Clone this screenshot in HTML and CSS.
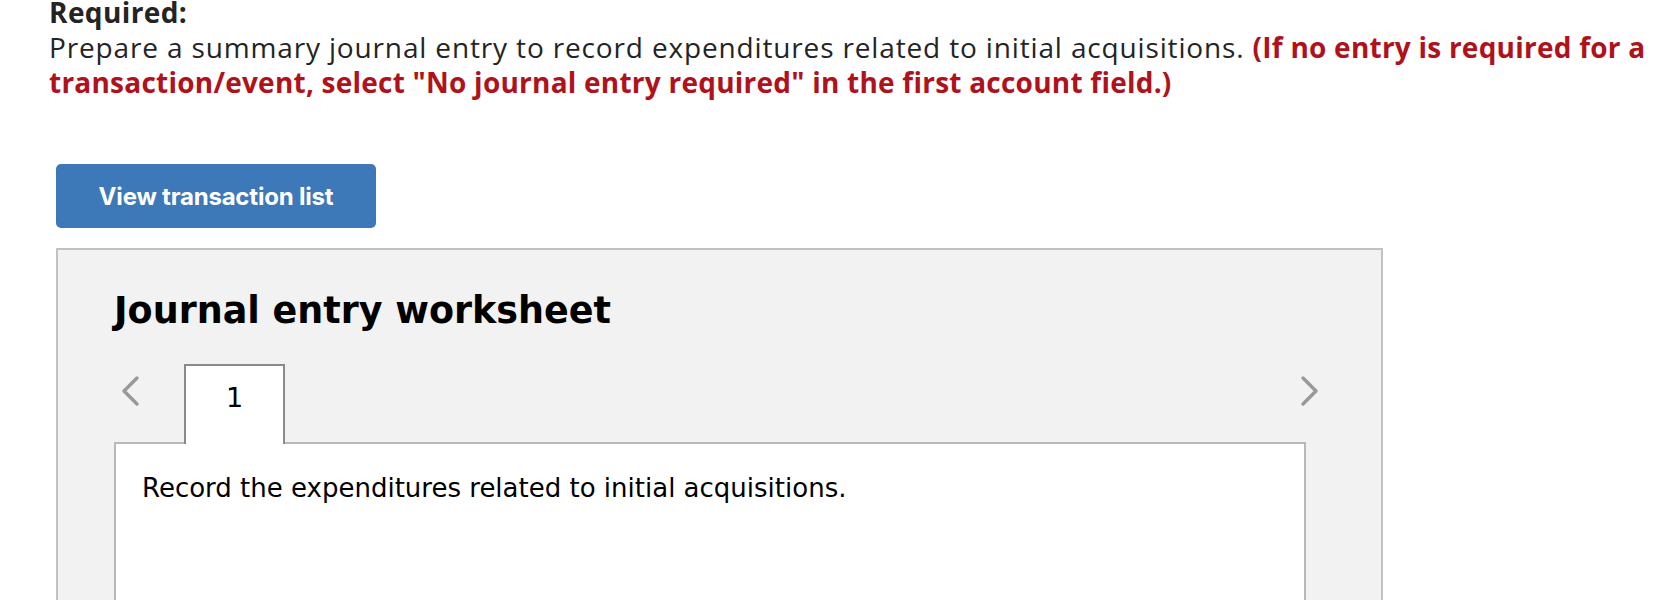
FILE: index.html
```html
<!DOCTYPE html>
<html lang="en">
<head>
<meta charset="utf-8">
<title>Journal entry worksheet</title>
<link rel="stylesheet" href="styles.css">
</head>
<body>
<main class="page">
  <section class="question">
    <p class="req-label">Required:</p>
    <p class="req-text">Prepare a summary journal entry to record expenditures related to initial acquisitions. <strong class="hint">(If no entry is required for a transaction/event, select "No journal entry required" in the first account field.)</strong></p>
  </section>

  <button class="btn-view" type="button">View transaction list</button>

  <section class="worksheet">
    <h2 class="ws-title">Journal entry worksheet</h2>
    <div class="ws-nav">
      <div class="nav-prev">
        <svg class="chev" width="20" height="32" viewBox="0 0 20 32" aria-hidden="true"><path d="M17 3 L4 16 L17 29"/></svg>
      </div>
      <div class="tab">1</div>
      <div class="nav-next">
        <svg class="chev" width="20" height="32" viewBox="0 0 20 32" aria-hidden="true"><path d="M3 3 L16 16 L3 29"/></svg>
      </div>
    </div>
    <div class="ws-body">
      <p class="ws-instr">Record the expenditures related to initial acquisitions.</p>
    </div>
  </section>
</main>
</body>
</html>
```

FILE: styles.css
```css
html, body {
  margin: 0;
  padding: 0;
  background: #ffffff;
}

.page {
  padding-left: 56px;
  overflow: hidden;
  height: 600px;
  box-sizing: border-box;
}

.question {
  margin-left: -7px;
  margin-top: -5px;
  width: 1600px;
  font-family: "Open Sans", "Lato", sans-serif;
  font-size: 28px;
  line-height: 35px;
  color: #242424;
}

.req-label {
  margin: 0;
  font-weight: 700;
  letter-spacing: 0.4px;
}

.req-text {
  margin: 0;
  letter-spacing: 0.85px;
}

.hint {
  color: #b0121c;
  font-weight: 700;
  letter-spacing: 0.23px;
}

.btn-view {
  display: block;
  margin: 64px 0 0 0;
  width: 320px;
  height: 64px;
  padding: 0;
  border: none;
  border-radius: 5px;
  background: #3d79b8;
  color: #ffffff;
  font-family: "Inter", "Roboto", sans-serif;
  font-weight: 700;
  font-size: 24px;
  letter-spacing: -0.2px;
}

.worksheet {
  margin-top: 20px;
  width: 1327px;
  box-sizing: border-box;
  border: 2px solid #c2c2c2;
  background: #f2f2f2;
  padding: 41px 75px 0 56px;
  min-height: 420px;
}

.ws-title {
  margin: 0;
  font-family: "DejaVu Sans", Verdana, sans-serif;
  font-weight: 700;
  font-size: 36.5px;
  line-height: 40px;
  color: #000000;
}

.ws-nav {
  display: flex;
  align-items: flex-start;
  margin-top: 33px;
}

.nav-prev {
  width: 70px;
  padding-top: 11px;
}

.nav-prev .chev {
  margin-left: 6px;
  display: block;
}

.nav-next {
  margin-left: auto;
  margin-right: -14px;
  padding-top: 11px;
}

.nav-next .chev {
  display: block;
}

.chev path {
  fill: none;
  stroke: #9a9a9a;
  stroke-width: 3.5;
  stroke-linecap: round;
  stroke-linejoin: round;
}

.tab {
  position: relative;
  z-index: 1;
  width: 101px;
  height: 80px;
  margin-bottom: -2px;
  padding-top: 16px;
  box-sizing: border-box;
  border: 2px solid #8a8a8a;
  border-bottom: none;
  background: #ffffff;
  text-align: center;
  font-family: "DejaVu Sans", Verdana, sans-serif;
  font-size: 27px;
  line-height: 32px;
  color: #000000;
}

.ws-body {
  border: 2px solid #b8b8b8;
  background: #ffffff;
  padding: 29px 24px 0 26px;
  min-height: 260px;
}

.ws-instr {
  margin: 0;
  font-family: "DejaVu Sans", Verdana, sans-serif;
  font-size: 26px;
  line-height: 30px;
  color: #000000;
}
```
